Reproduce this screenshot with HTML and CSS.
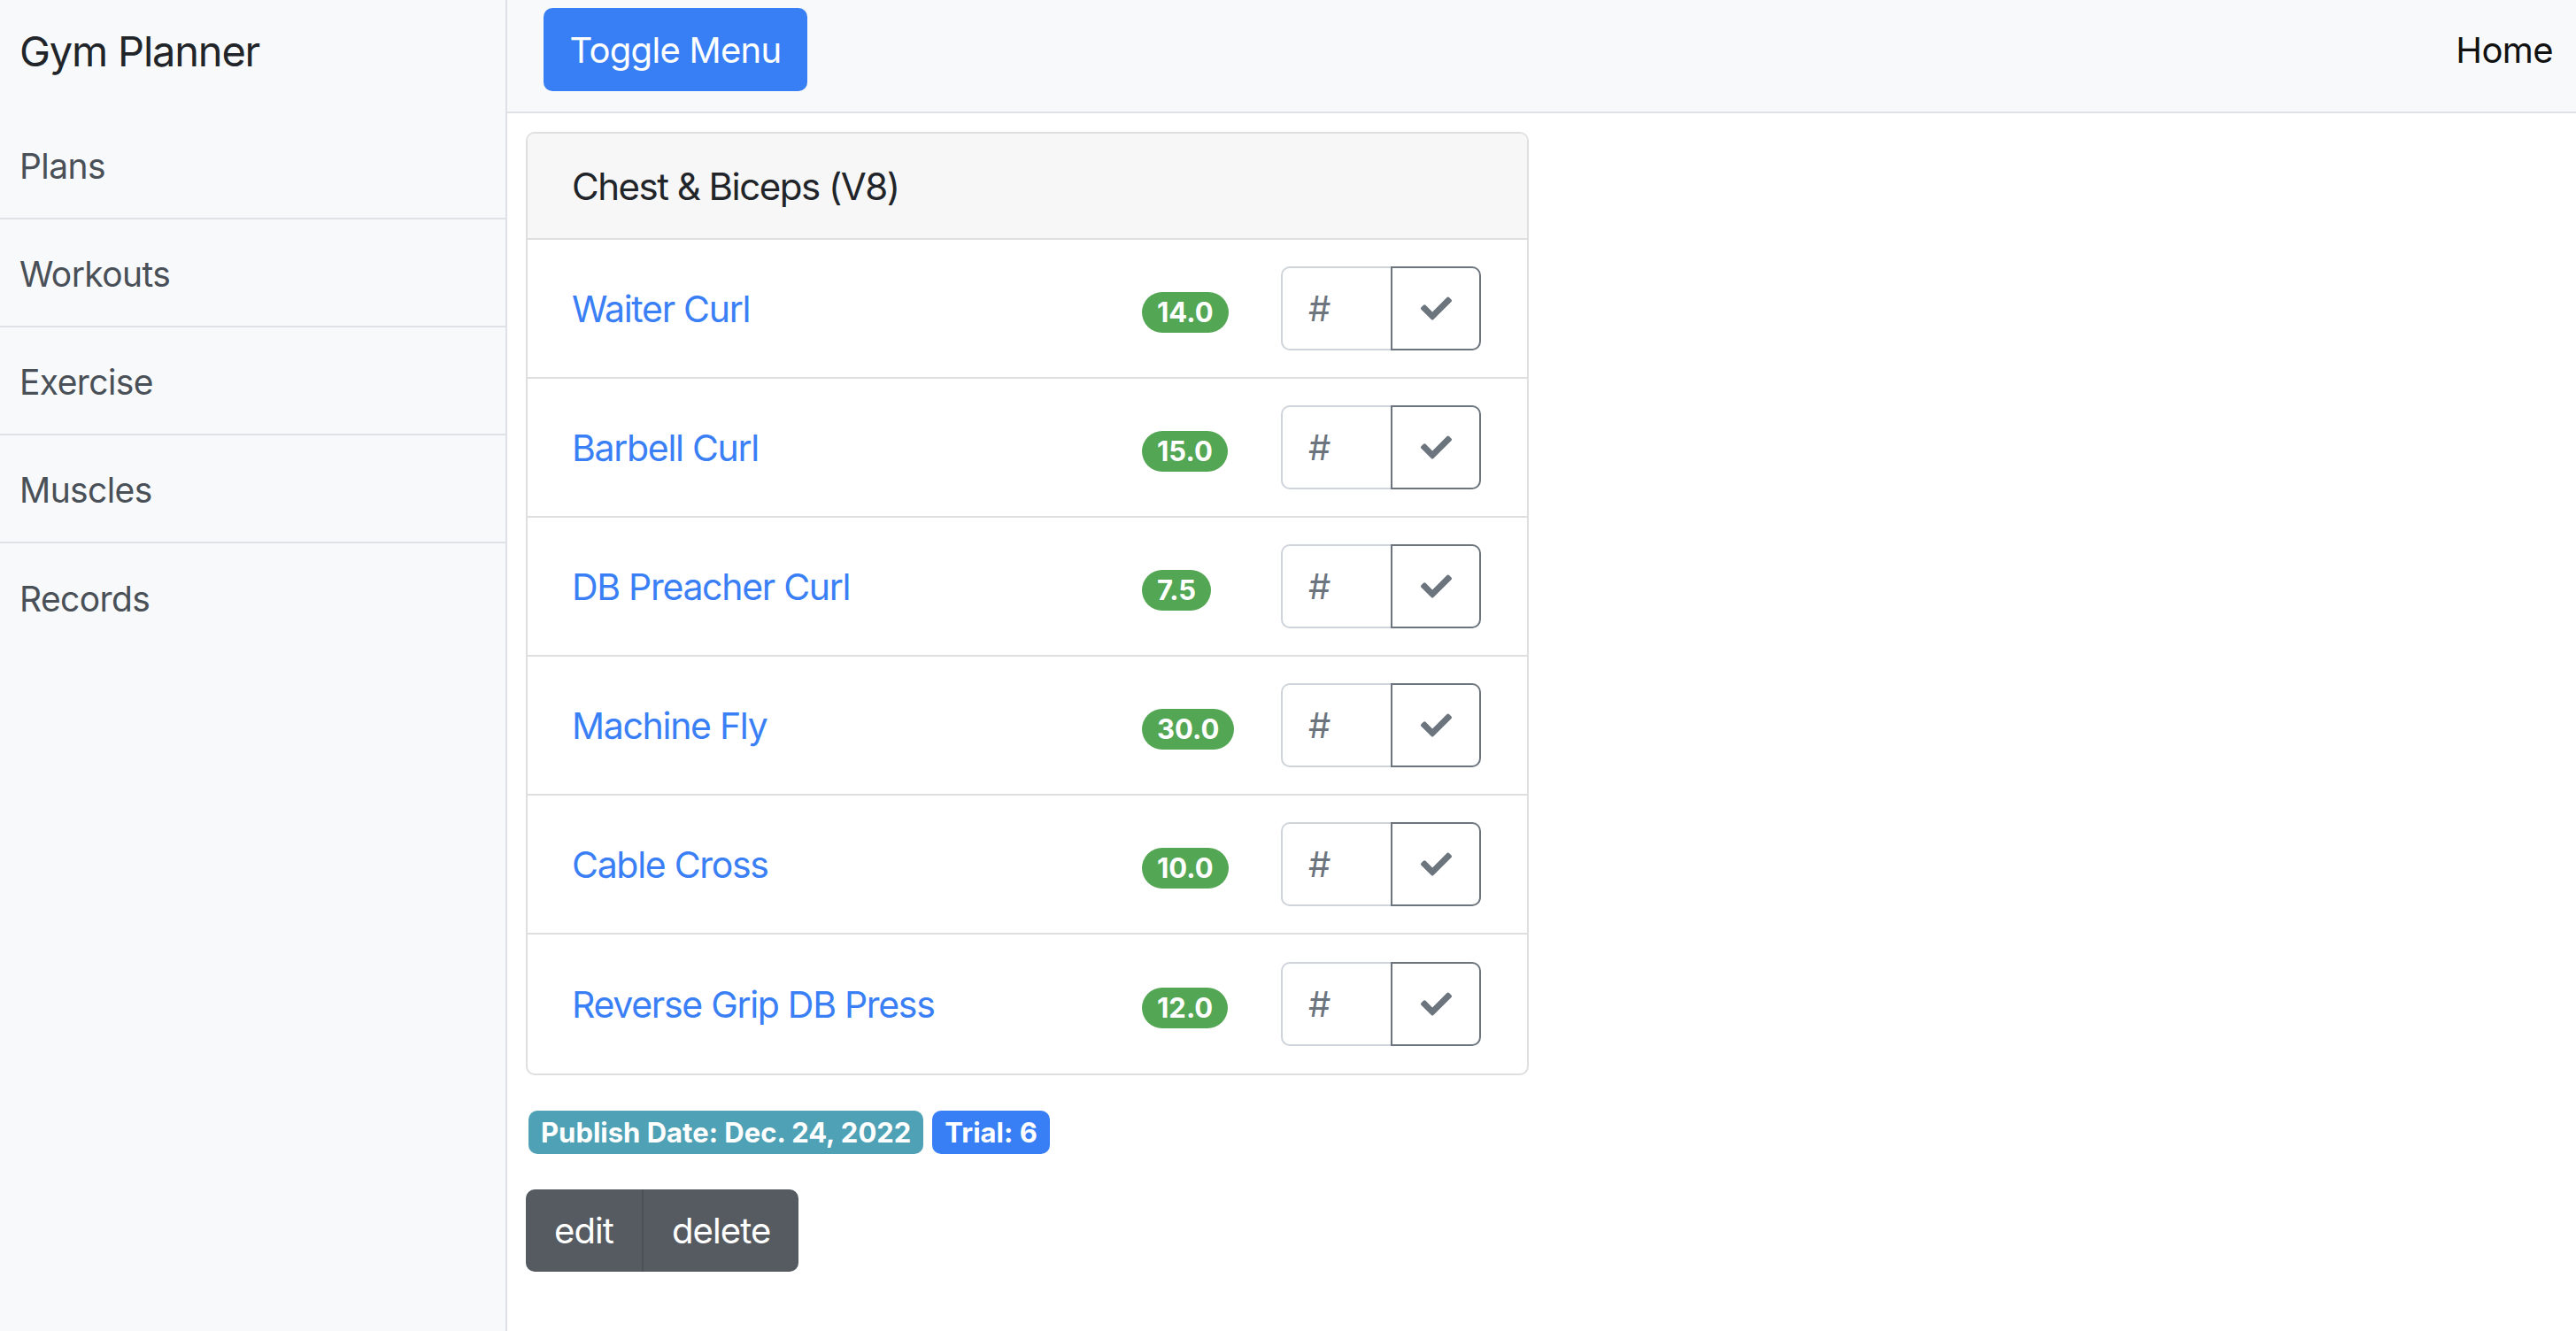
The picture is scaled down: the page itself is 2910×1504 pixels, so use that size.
FILE: index.html
```html
<!DOCTYPE html>
<html lang="en">
<head>
<meta charset="utf-8">
<title>Gym Planner</title>
<link rel="stylesheet" href="styles.css">
</head>
<body>
<div class="wrapper">
  <aside class="sidebar">
    <div class="sidebar-heading">Gym Planner</div>
    <nav class="side-list">
      <a class="side-item" href="#">Plans</a>
      <a class="side-item" href="#">Workouts</a>
      <a class="side-item" href="#">Exercise</a>
      <a class="side-item" href="#">Muscles</a>
      <a class="side-item" href="#">Records</a>
    </nav>
  </aside>
  <div class="page">
    <header class="navbar">
      <button class="btn-toggle" type="button">Toggle Menu</button>
      <a class="nav-home" href="#">Home</a>
    </header>
    <main class="content">
      <section class="card">
        <div class="card-header">Chest &amp; Biceps (V8)</div>
        <ul class="rows">
          <li class="row"><a class="ex-name" href="#">Waiter Curl</a><span class="cell-badge"><span class="pill">14.0</span></span><div class="input-group"><input class="num" type="text" placeholder="#"><button class="btn-check" type="button"><svg class="check" viewBox="0 64 512 384"><path d="M173.9 439.4l-166.4-166.4c-10-10-10-26.2 0-36.2l36.2-36.2c10-10 26.2-10 36.2 0L192 312.7 432.1 72.6c10-10 26.2-10 36.2 0l36.2 36.2c10 10 10 26.2 0 36.2l-294.4 294.4c-10 10-26.2 10-36.2 0z"/></svg></button></div></li>
          <li class="row"><a class="ex-name" href="#">Barbell Curl</a><span class="cell-badge"><span class="pill">15.0</span></span><div class="input-group"><input class="num" type="text" placeholder="#"><button class="btn-check" type="button"><svg class="check" viewBox="0 64 512 384"><path d="M173.9 439.4l-166.4-166.4c-10-10-10-26.2 0-36.2l36.2-36.2c10-10 26.2-10 36.2 0L192 312.7 432.1 72.6c10-10 26.2-10 36.2 0l36.2 36.2c10 10 10 26.2 0 36.2l-294.4 294.4c-10 10-26.2 10-36.2 0z"/></svg></button></div></li>
          <li class="row"><a class="ex-name" href="#">DB Preacher Curl</a><span class="cell-badge"><span class="pill">7.5</span></span><div class="input-group"><input class="num" type="text" placeholder="#"><button class="btn-check" type="button"><svg class="check" viewBox="0 64 512 384"><path d="M173.9 439.4l-166.4-166.4c-10-10-10-26.2 0-36.2l36.2-36.2c10-10 26.2-10 36.2 0L192 312.7 432.1 72.6c10-10 26.2-10 36.2 0l36.2 36.2c10 10 10 26.2 0 36.2l-294.4 294.4c-10 10-26.2 10-36.2 0z"/></svg></button></div></li>
          <li class="row"><a class="ex-name" href="#">Machine Fly</a><span class="cell-badge"><span class="pill">30.0</span></span><div class="input-group"><input class="num" type="text" placeholder="#"><button class="btn-check" type="button"><svg class="check" viewBox="0 64 512 384"><path d="M173.9 439.4l-166.4-166.4c-10-10-10-26.2 0-36.2l36.2-36.2c10-10 26.2-10 36.2 0L192 312.7 432.1 72.6c10-10 26.2-10 36.2 0l36.2 36.2c10 10 10 26.2 0 36.2l-294.4 294.4c-10 10-26.2 10-36.2 0z"/></svg></button></div></li>
          <li class="row"><a class="ex-name" href="#">Cable Cross</a><span class="cell-badge"><span class="pill">10.0</span></span><div class="input-group"><input class="num" type="text" placeholder="#"><button class="btn-check" type="button"><svg class="check" viewBox="0 64 512 384"><path d="M173.9 439.4l-166.4-166.4c-10-10-10-26.2 0-36.2l36.2-36.2c10-10 26.2-10 36.2 0L192 312.7 432.1 72.6c10-10 26.2-10 36.2 0l36.2 36.2c10 10 10 26.2 0 36.2l-294.4 294.4c-10 10-26.2 10-36.2 0z"/></svg></button></div></li>
          <li class="row"><a class="ex-name" href="#">Reverse Grip DB Press</a><span class="cell-badge"><span class="pill">12.0</span></span><div class="input-group"><input class="num" type="text" placeholder="#"><button class="btn-check" type="button"><svg class="check" viewBox="0 64 512 384"><path d="M173.9 439.4l-166.4-166.4c-10-10-10-26.2 0-36.2l36.2-36.2c10-10 26.2-10 36.2 0L192 312.7 432.1 72.6c10-10 26.2-10 36.2 0l36.2 36.2c10 10 10 26.2 0 36.2l-294.4 294.4c-10 10-26.2 10-36.2 0z"/></svg></button></div></li>
        </ul>
      </section>
      <div class="meta">
        <span class="badge badge-info">Publish Date: Dec. 24, 2022</span>
        <span class="badge badge-primary">Trial: 6</span>
      </div>
      <div class="btn-group">
        <a class="btn-dark" href="#">edit</a><a class="btn-dark" href="#">delete</a>
      </div>
    </main>
  </div>
</div>
</body>
</html>
```

FILE: styles.css
```css
* { box-sizing: border-box; }

html, body {
  margin: 0;
  padding: 0;
  height: 100%;
  background: #ffffff;
  font-family: Inter, "Noto Sans", "Liberation Sans", sans-serif;
  color: #212529;
}

a { text-decoration: none; }

.wrapper {
  display: flex;
  min-height: 100vh;
}

/* Sidebar */
.sidebar {
  width: 573px;
  flex: 0 0 573px;
  background: #f8f9fa;
  border-right: 2px solid #dee2e6;
}

.sidebar-heading {
  height: 126px;
  display: flex;
  align-items: center;
  padding: 0 0 12px 22px;
  font-size: 47px;
  letter-spacing: -1.2px;
  color: #212529;
}

.side-list {
  display: flex;
  flex-direction: column;
}

.side-item {
  height: 122px;
  display: flex;
  align-items: center;
  padding: 2px 22px 0;
  font-size: 39px;
  letter-spacing: -0.6px;
  color: #495057;
  border-bottom: 2px solid #dee2e6;
}

.side-item:last-child { border-bottom: none; }

/* Page */
.page {
  flex: 1;
  display: flex;
  flex-direction: column;
}

.navbar {
  height: 128px;
  background: #f8f9fa;
  border-bottom: 2px solid #dee2e6;
  display: flex;
  justify-content: space-between;
  align-items: flex-start;
  padding: 9px 26px 0 41px;
}

.btn-toggle {
  width: 298px;
  height: 94px;
  border: none;
  border-radius: 10px;
  background: #387ff6;
  color: #ffffff;
  font-family: inherit;
  font-size: 40px;
  letter-spacing: -0.7px;
  padding: 0;
}

.nav-home {
  height: 94px;
  display: flex;
  align-items: center;
  font-size: 40px;
  letter-spacing: -0.6px;
  color: #111111;
}

.content {
  padding: 21px 21px;
}

/* Card */
.card {
  width: 1133px;
  border: 2px solid #dfdfdf;
  border-radius: 10px;
  overflow: hidden;
}

.card-header {
  height: 120px;
  display: flex;
  align-items: center;
  padding: 0 50px;
  background: #f7f7f7;
  border-bottom: 2px solid #dfdfdf;
  font-size: 42px;
  letter-spacing: -1.5px;
  color: #212529;
}

.rows {
  list-style: none;
  margin: 0;
  padding: 0;
}

.row {
  display: grid;
  grid-template-columns: 1fr 157px 226px;
  align-items: center;
  height: 157px;
  padding: 0 52px 0 50px;
  border-bottom: 2px solid #dfdfdf;
}

.row:last-child { border-bottom: none; }

.ex-name {
  font-size: 41px;
  letter-spacing: -1.3px;
  color: #3a7ff5;
}

.cell-badge {
  display: flex;
  margin-top: 8px;
}

.pill {
  display: inline-flex;
  align-items: center;
  height: 46px;
  padding: 0 17px;
  border-radius: 23px;
  background: #53a653;
  color: #ffffff;
  font-size: 31px;
  font-weight: 700;
  letter-spacing: 0;
}

.input-group {
  display: flex;
  height: 95px;
}

.num {
  width: 124px;
  height: 95px;
  margin: 0;
  border: 2px solid #ced4da;
  border-right: none;
  border-radius: 10px 0 0 10px;
  padding: 0 0 0 29px;
  font-family: inherit;
  font-size: 40px;
  color: #495057;
  background: #ffffff;
  outline: none;
}

.num::placeholder { color: #6c757d; }

.btn-check {
  width: 102px;
  height: 95px;
  margin: 0;
  padding: 0;
  border: 2px solid #6c757d;
  border-radius: 0 10px 10px 0;
  background: #ffffff;
  display: flex;
  align-items: center;
  justify-content: center;
}

.check {
  width: 35px;
  height: 27px;
  fill: #6c757d;
}

/* Meta badges */
.meta {
  display: flex;
  gap: 10px;
  margin: 40px 0 0 3px;
}

.badge {
  display: inline-flex;
  align-items: center;
  height: 49px;
  padding: 0 14px;
  border-radius: 10px;
  color: #ffffff;
  font-size: 31px;
  font-weight: 700;
  letter-spacing: 0;
}

.badge-info { background: #4fa2b6; }
.badge-primary { background: #387ff6; }

/* Buttons */
.btn-group {
  display: inline-flex;
  margin-top: 40px;
  border-radius: 10px;
  overflow: hidden;
}

.btn-dark {
  height: 93px;
  display: flex;
  align-items: center;
  padding: 0 32px;
  background: #565b62;
  color: #ffffff;
  font-size: 40px;
  letter-spacing: -0.9px;
}

.btn-dark + .btn-dark { border-left: 2px solid #4c5157; }
```
